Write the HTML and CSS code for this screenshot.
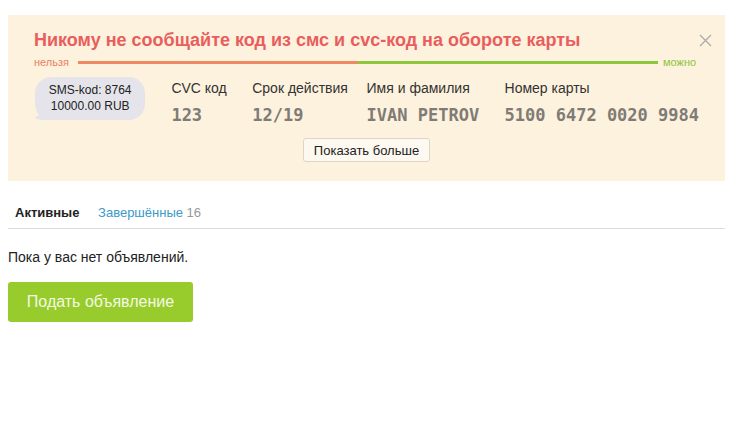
FILE: index.html
```html
<!DOCTYPE html>
<html lang="ru">
<head>
<meta charset="utf-8">
<link rel="stylesheet" href="styles.css">
</head>
<body>
<div class="warn">
  <div class="warn-title">Никому не сообщайте код из смс и cvc-код на обороте карты</div>
  <span class="close" aria-label="закрыть"><svg width="13" height="13" viewBox="0 0 13 13"><path d="M1 1L12 12M12 1L1 12" stroke="#a9a9a9" stroke-width="1.2" fill="none"/></svg></span>
  <div class="scale">
    <span class="no">нельзя</span>
    <span class="bar"><span class="bar-bad"></span><span class="bar-good"></span></span>
    <span class="yes">можно</span>
  </div>
  <div class="card-row">
    <div class="bubble">SMS-kod: 8764<br>10000.00 RUB</div>
    <div class="col col-cvc"><div class="lbl">CVC код</div><div class="val">123</div></div>
    <div class="col col-exp"><div class="lbl">Срок действия</div><div class="val">12/19</div></div>
    <div class="col col-name"><div class="lbl">Имя и фамилия</div><div class="val">IVAN PETROV</div></div>
    <div class="col col-num"><div class="lbl">Номер карты</div><div class="val">5100 6472 0020 9984</div></div>
  </div>
  <div class="more-wrap"><button class="more">Показать больше</button></div>
</div>
<div class="tabs">
  <span class="tab active">Активные</span>
  <span class="tab link">Завершённые <span class="count">16</span></span>
</div>
<p class="empty">Пока у вас нет объявлений.</p>
<button class="add">Подать объявление</button>
</body>
</html>
```

FILE: styles.css
```css
body {
  margin: 15px 7px 8px 8px;
  font-family: "Liberation Sans", Arial, sans-serif;
  background: #fff;
  color: #222;
}
.warn {
  position: relative;
  background: #fdf2dd;
  padding: 14px 26px 19px 26px;
}
.warn-title {
  color: #e95d5d;
  font-weight: bold;
  font-size: 18px;
  line-height: 22px;
}
.close {
  position: absolute;
  right: 13px;
  top: 19px;
  line-height: 0;
}
.scale {
  display: flex;
  align-items: center;
  height: 14px;
  margin-top: 4px;
  font-size: 11px;
}
.no { color: #e98062; width: 44px; }
.yes { color: #8dc33a; margin-left: 5px; }
.bar {
  display: flex;
  width: 580px;
  height: 3px;
}
.bar-bad { width: 280px; background: #ec8a63; }
.bar-good { flex: 1; background: #8ec63d; }
.card-row {
  display: flex;
  align-items: flex-start;
  margin-top: 6px;
}
.bubble {
  position: relative;
  margin-left: 1px;
  margin-top: 2px;
  width: 112px;
  height: 43px;
  box-sizing: border-box;
  padding-top: 5px;
  background: #e4e4ea;
  border-radius: 16px;
  font-size: 12px;
  line-height: 16px;
  text-align: center;
  color: #222;
}
.bubble::before {
  content: "";
  position: absolute;
  left: -4px;
  bottom: 0;
  width: 16px;
  height: 10px;
  background: #e4e4ea;
  border-radius: 0 0 0 12px;
  clip-path: polygon(0 100%, 100% 0, 100% 100%);
}
.col { padding-top: 4px; white-space: nowrap; }
.col-cvc { margin-left: 26px; width: 82px; }
.col-exp { width: 116px; }
.col-name { width: 140px; }
.lbl {
  font-size: 14px;
  line-height: 18px;
  color: #333;
}
.val {
  margin-top: 8px;
  font-family: "DejaVu Sans Mono", monospace;
  font-weight: bold;
  font-size: 17px;
  line-height: 20px;
  color: #7f7b76;
}
.more-wrap {
  display: flex;
  justify-content: center;
  margin-top: 13px;
}
.more {
  font-family: "Liberation Sans", Arial, sans-serif;
  font-size: 13px;
  color: #222;
  background: #fdf9f1;
  border: 1px solid #ddd6c8;
  border-radius: 3px;
  height: 24px;
  padding: 0 10px;
}
.tabs {
  margin-top: 24px;
  padding: 0 7px 7px;
  border-bottom: 1px solid #dcdcdc;
  font-size: 13px;
  line-height: 16px;
}
.tab { margin-right: 15px; }
.active { font-weight: bold; color: #222; }
.link { color: #3b9ac8; }
.count { color: #999; }
.empty {
  margin: 19px 0 0;
  font-size: 14px;
  line-height: 18px;
  color: #222;
}
.add {
  margin-top: 16px;
  width: 185px;
  height: 40px;
  border: 0;
  border-radius: 3px;
  background: #98cc2c;
  color: #f3fae3;
  font-family: "Liberation Sans", Arial, sans-serif;
  font-size: 16px;
}
```
